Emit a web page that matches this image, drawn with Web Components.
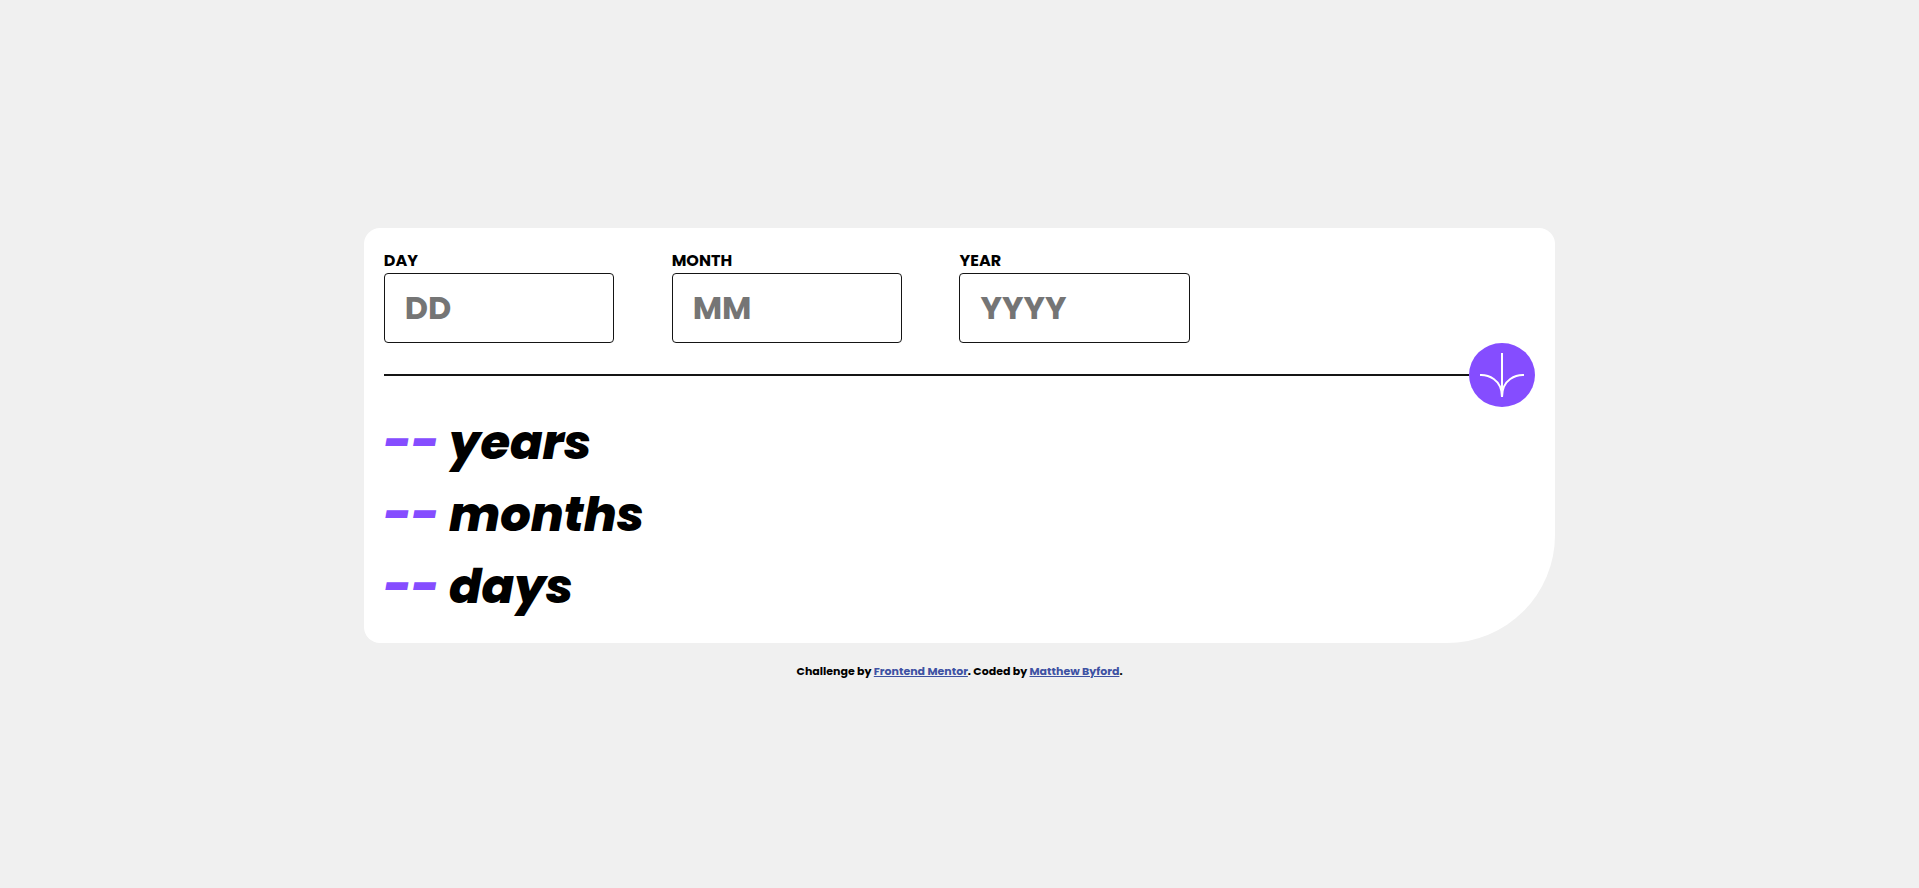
<!DOCTYPE html>
<html lang="en">
<head>
<meta charset="utf-8">
<meta name="viewport" content="width=device-width, initial-scale=1">
<title>Age calculator app</title>
<style>
  body { margin: 0; background: #f0f0f0; color: #000; font-family: Poppins, Inter, "Open Sans", sans-serif; font-weight: 700; }
</style>
</head>
<body>
<age-page>
  <age-card>
    <date-field slot="field" label="DAY" hint="DD"></date-field>
    <date-field slot="field" label="MONTH" hint="MM"></date-field>
    <date-field slot="field" label="YEAR" hint="YYYY"></date-field>
    <age-result slot="result" unit="years">--</age-result>
    <age-result slot="result" unit="months">--</age-result>
    <age-result slot="result" unit="days">--</age-result>
  </age-card>
  <page-credit slot="footer"></page-credit>
</age-page>
<script>
  class BaseElement extends HTMLElement {
    constructor() {
      super();
      this.attachShadow({ mode: "open" });
    }
    connectedCallback() { this.shadowRoot.innerHTML = this.render(); }
  }

  customElements.define("age-page", class extends BaseElement {
    render() {
      return `<style>
        :host { display: flex; flex-direction: column; align-items: center; justify-content: center; gap: 20px; min-height: 100vh; padding-top: 20px; box-sizing: border-box; }
        main { width: 60%; padding: 20px; background: #fff; border-radius: 16px 16px 108px 16px; }
      </style>
      <main><slot></slot></main><slot name="footer"></slot>`;
    }
  });

  customElements.define("age-card", class extends BaseElement {
    render() {
      return `<style>
        :host { display: block; }
        .fields { display: grid; grid-template-columns: repeat(4, 1fr); }
        .divider { display: flex; align-items: center; }
        hr { flex: 1; height: 2px; margin: 0; border: 0; background: #151515; }
        button { display: grid; place-items: center; padding: 10px; border: 0; border-radius: 50%; background: #854dff; cursor: pointer; }
        svg { display: block; }
      </style>
      <form onsubmit="return false">
        <div class="fields"><slot name="field"></slot></div>
        <div class="divider">
          <hr>
          <button type="submit" aria-label="Calculate age">
            <svg width="46" height="44" viewBox="0 0 46 44" fill="none" stroke="#fff" stroke-width="2" aria-hidden="true"><path d="M1 22.019C8.333 21.686 23 25.616 23 44M23 44V0M45 22.019C37.667 21.686 23 25.616 23 44"/></svg>
          </button>
        </div>
      </form>
      <slot name="result"></slot>`;
    }
  });

  customElements.define("date-field", class extends BaseElement {
    render() {
      return `<style>
        :host { display: block; }
        label { display: block; font-size: 16px; line-height: 25px; }
        input { display: block; width: 80%; height: 70px; box-sizing: border-box; padding: 0 20px; border: 1px solid #151515; border-radius: 4px; background: #fff; font: inherit; font-size: 32px; color: #000; }
        input::placeholder { color: #757575; opacity: 1; }
      </style>
      <label for="value">${this.getAttribute("label")}</label>
      <input id="value" type="text" inputmode="numeric" placeholder="${this.getAttribute("hint")}">`;
    }
  });

  customElements.define("age-result", class extends BaseElement {
    render() {
      return `<style>
        :host { display: block; font-size: 48px; line-height: 72px; font-style: italic; font-weight: 800; }
        .value { color: #854dff; }
      </style>
      <span class="value"><slot></slot></span> ${this.getAttribute("unit")}`;
    }
  });

  customElements.define("page-credit", class extends BaseElement {
    render() {
      return `<style>
        :host { display: block; font-size: 11px; line-height: 17px; text-align: center; }
        a { color: #3e52a3; }
      </style>
      Challenge by <a href="https://www.frontendmentor.io">Frontend Mentor</a>. Coded by <a href="#">Matthew Byford</a>.`;
    }
  });
</script>
</body>
</html>
